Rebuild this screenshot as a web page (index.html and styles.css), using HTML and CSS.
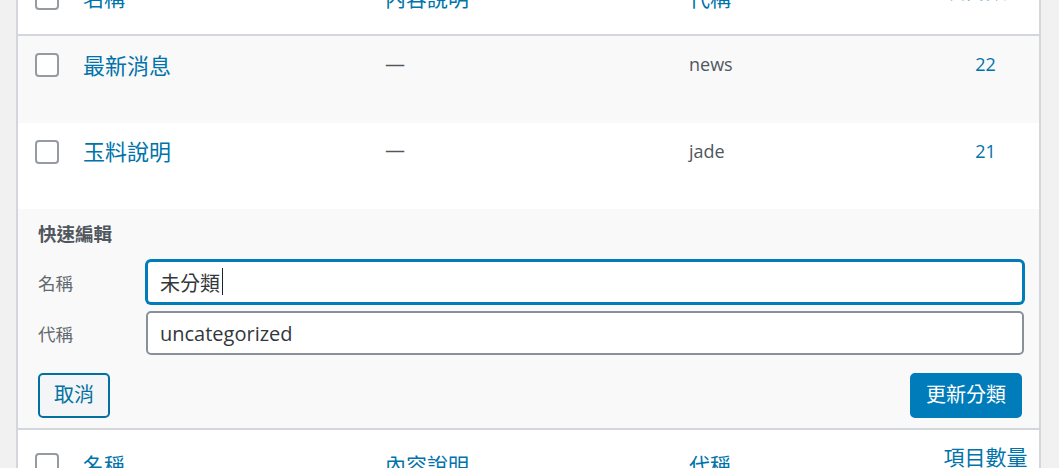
FILE: index.html
```html
<!DOCTYPE html>
<html lang="zh-Hant">
<head>
  <meta charset="UTF-8">
  <title>分類</title>
  <link rel="stylesheet" href="styles.css">
</head>
<body>

  <div class="wrap">
    <table class="list">
      <colgroup>
        <col class="c-cb">
        <col class="c-name">
        <col class="c-desc">
        <col class="c-slug">
        <col class="c-num">
      </colgroup>
      <thead>
        <tr class="head">
          <th class="cb"><input type="checkbox" class="check"></th>
          <th class="col"><a href="#">名稱</a></th>
          <th class="col"><a href="#">內容說明</a></th>
          <th class="col"><a href="#">代稱</a></th>
          <th class="col num"><a href="#">項目數量</a></th>
        </tr>
      </thead>
      <tbody>
        <tr class="row alt">
          <td class="cb"><input type="checkbox" class="check"></td>
          <td class="title"><a href="#">最新消息</a></td>
          <td class="desc">—</td>
          <td class="slug">news</td>
          <td class="num"><a href="#">22</a></td>
        </tr>
        <tr class="row">
          <td class="cb"><input type="checkbox" class="check"></td>
          <td class="title"><a href="#">玉料說明</a></td>
          <td class="desc">—</td>
          <td class="slug">jade</td>
          <td class="num"><a href="#">21</a></td>
        </tr>
        <tr class="quick-edit">
          <td colspan="5">
            <div class="qe-title">快速編輯</div>

            <div class="qe-field">
              <label class="qe-label" for="qe-name">名稱</label>
              <span class="qe-input-wrap">
                <input type="text" id="qe-name" class="qe-input is-focus" value="未分類">
                <span class="caret"></span>
              </span>
            </div>

            <div class="qe-field">
              <label class="qe-label" for="qe-slug">代稱</label>
              <span class="qe-input-wrap">
                <input type="text" id="qe-slug" class="qe-input" value="uncategorized">
              </span>
            </div>

            <div class="qe-actions">
              <button class="btn btn-cancel">取消</button>
              <button class="btn btn-primary">更新分類</button>
            </div>
          </td>
        </tr>
      </tbody>
      <tfoot>
        <tr class="head">
          <th class="cb"><input type="checkbox" class="check"></th>
          <th class="col"><a href="#">名稱</a></th>
          <th class="col"><a href="#">內容說明</a></th>
          <th class="col"><a href="#">代稱</a></th>
          <th class="col num"><a href="#">項目數量</a></th>
        </tr>
      </tfoot>
    </table>
  </div>

</body>
</html>
```

FILE: styles.css
```css
/* Estilos gerais */
* {
  box-sizing: border-box;
}

body {
  margin: 0;
  background-color: #f1f1f1;
  font-family: "Open Sans", "Noto Sans CJK TC", sans-serif;
  color: #555;
}

a {
  color: #0073aa;
  text-decoration: none;
}

.wrap {
  margin: -37px 18px 0 16px;
}

/* Tabela */
.list {
  width: 100%;
  table-layout: fixed;
  border-collapse: separate;
  border-spacing: 0;
  background-color: #fff;
  border-left: 2px solid #d3d6da;
  border-right: 2px solid #d3d6da;
}

.c-cb { width: 55px; }
.c-name { width: 302px; }
.c-desc { width: 304px; }
.c-slug { width: 253px; }
.c-num { width: 107px; }

.list th,
.list td {
  padding: 0;
  vertical-align: top;
  text-align: left;
  font-weight: normal;
}

.check {
  appearance: none;
  display: block;
  width: 24px;
  height: 24px;
  margin: 0;
  border: 2px solid #959ba1;
  border-radius: 4px;
  background-color: #fff;
}

/* Cabeçalho e rodapé */
.head {
  height: 73px;
}

thead .head th {
  border-bottom: 2px solid #d3d6da;
}

tfoot .head th {
  border-top: 2px solid #d3d6da;
}

.head .cb {
  padding: 23px 0 0 17px;
}

.head .col {
  padding: 25px 10px 0;
  font-size: 21px;
  line-height: 21px;
}

.head .num {
  padding-top: 17px;
  text-align: center;
}

/* Linhas */
.row {
  height: 86.5px;
}

.row.alt {
  background-color: #f9f9f9;
}

.row .cb {
  padding: 17px 0 0 17px;
}

.row .title {
  padding: 17.5px 10px 0;
  font-size: 22px;
  line-height: 22px;
}

.row .desc {
  padding: 17.5px 10px 0;
  font-size: 20px;
  line-height: 20px;
  color: #50575e;
}

.row .slug {
  padding: 19px 10px 0;
  font-size: 18px;
  line-height: 18px;
  color: #50575e;
}

.row .num {
  padding-top: 19px;
  font-size: 18px;
  line-height: 18px;
  text-align: center;
}

/* Edição rápida */
.quick-edit td {
  background-color: #f9f9f9;
  padding: 16px 15px 10.5px 20px;
}

.qe-title {
  font-size: 18.5px;
  line-height: 18.5px;
  font-weight: bold;
  color: #50575e;
  margin-bottom: 16.5px;
}

.qe-field {
  display: flex;
  align-items: center;
}

.qe-field + .qe-field {
  margin-top: 7px;
}

.qe-label {
  width: 108px;
  font-size: 17.5px;
  color: #646970;
}

.qe-input-wrap {
  position: relative;
  flex: 1;
  display: flex;
}

.qe-input {
  flex: 1;
  height: 44px;
  padding: 0 12px;
  border: 2px solid #8a9099;
  border-radius: 5px;
  background-color: #fff;
  font-family: "Open Sans", "Noto Sans CJK TC", sans-serif;
  font-size: 20px;
  color: #32373c;
  outline: none;
}

.qe-input.is-focus {
  border-color: #007cba;
  box-shadow: 0 0 0 1px #007cba;
}

.caret {
  position: absolute;
  left: 76px;
  top: 8px;
  width: 1px;
  height: 27px;
  background-color: #1d2327;
}

.qe-actions {
  display: flex;
  justify-content: space-between;
  margin-top: 17.5px;
}

.btn {
  height: 45px;
  padding: 0 14px;
  border: 2px solid #0071a1;
  border-radius: 5px;
  font-family: "Open Sans", "Noto Sans CJK TC", sans-serif;
  font-size: 20px;
  line-height: 20px;
  cursor: pointer;
}

.btn-cancel {
  background-color: #f3f5f6;
  color: #0071a1;
}

.btn-primary {
  background-color: #007cba;
  border-color: #007cba;
  color: #fff;
  margin-right: 2px;
}
```
